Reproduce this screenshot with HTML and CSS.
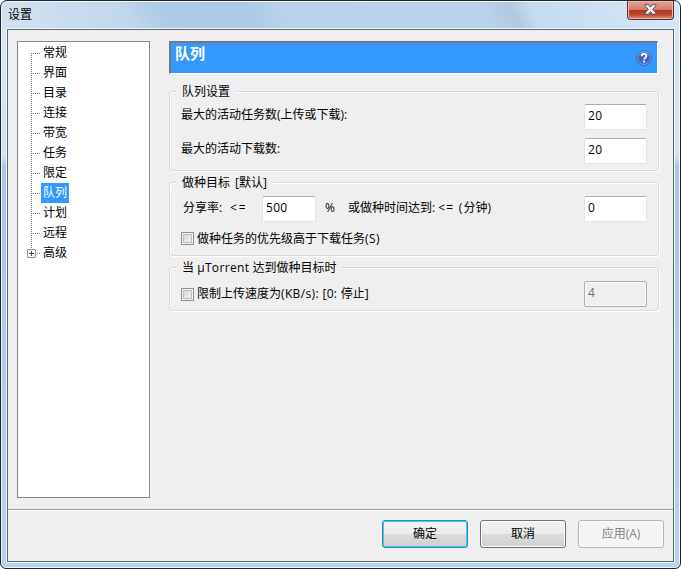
FILE: index.html
```html
<!DOCTYPE html>
<html lang="zh-CN">
<head>
<meta charset="utf-8">
<title>设置</title>
<link rel="stylesheet" href="styles.css">
</head>
<body>
<div class="window">
  <header class="titlebar">
    <span class="title">设置</span>
    <button class="close" aria-label="关闭">
      <svg width="13" height="11" viewBox="0 0 13 11"><path d="M1 .7h3.4l2.1 2.4L8.600.7H12v1L8.700 5.300 12 9v1.200H8.600L6.500 7.800l-2.100 2.400H1V9l3.300-3.700L1 1.700z" fill="#f8f8f8" stroke="#5a4549" stroke-width="1"/></svg>
    </button>
  </header>
  <main class="client">
    <div class="body">
      <ul class="tree">
        <li><span>常规</span></li>
        <li><span>界面</span></li>
        <li><span>目录</span></li>
        <li><span>连接</span></li>
        <li><span>带宽</span></li>
        <li><span>任务</span></li>
        <li><span>限定</span></li>
        <li><span class="selected">队列</span></li>
        <li><span>计划</span></li>
        <li><span>远程</span></li>
        <li class="branch"><svg class="plus" width="9" height="9" viewBox="0 0 9 9"><rect x=".5" y=".5" width="8" height="8" rx=".5" fill="#f7f7f7" stroke="#929292"/><path d="M2 4.500h5M4.500 2v5" stroke="#34456e"/></svg><span>高级</span></li>
      </ul>
      <div class="page">
        <div class="banner">
          <span>队列</span>
          <svg class="help" width="16" height="16" viewBox="0 0 16 16"><defs><linearGradient id="h" x2="0" y2="1"><stop offset="0" stop-color="#7592d6"/><stop offset=".5" stop-color="#3e62b8"/><stop offset="1" stop-color="#4a78d0"/></linearGradient></defs><circle cx="8" cy="8" r="7.400" fill="url(#h)" stroke="#3558a5" stroke-width=".8"/><circle cx="8" cy="8" r="6.500" fill="none" stroke="#91aae4" stroke-width=".7"/><path d="M5.700 6.200C5.700 3.200 10.400 3.200 10.400 5.900 10.400 7.700 8.100 7.500 8.100 9.500" fill="none" stroke="#fff" stroke-width="1.600"/><rect x="7.200" y="10.700" width="1.800" height="1.800" fill="#fff"/></svg>
        </div>
        <section class="group limits">
          <h2>队列设置</h2>
          <div class="row"><label class="active-label">最大的活动任务数(上传或下载):</label><input class="value" value="20"></div>
          <div class="row"><label>最大的活动下载数:</label><input class="value" value="20"></div>
        </section>
        <section class="group goals">
          <h2 class="goal-title">做种目标 [默认]</h2>
          <div class="row"><label class="ratio">分享率:</label><span class="lte">&lt;=</span><input class="percent" value="500"><span class="unit">%</span><label class="time">或做种时间达到: <span class="wide">&lt;= (</span>分钟)</label><input class="value" value="0"></div>
          <div class="row check-row"><i class="check"></i><label class="priority">做种任务的优先级高于下载任务<span class="key">(S)</span></label></div>
        </section>
        <section class="group reached">
          <h2 class="reach-title">当 <span class="brand">µTorrent</span> 达到做种目标时</h2>
          <div class="row"><i class="check"></i><label class="speed">限制上传速度为<span class="rate">(KB/s): [0: </span>停止]</label><input class="value" value="4" disabled></div>
        </section>
      </div>
    </div>
    <footer class="actions">
      <button class="btn primary">确定</button>
      <button class="btn">取消</button>
      <button class="btn" disabled>应用(A)</button>
    </footer>
  </main>
</div>
</body>
</html>
```
FILE: styles.css
```css
* { box-sizing: border-box; }
body {
  margin: 0;
  background: #fff;
  color: #000;
  font: 12px/20px "Open Sans", "Noto Sans CJK SC", sans-serif;
}
button, input { font: inherit; color: inherit; }
.window {
  width: 681px;
  height: 569px;
  padding: 0 5px 5px;
  border: 1px solid #20242b;
  border-radius: 7px 7px 6px 6px;
  box-shadow: inset 0 0 0 1px #eef8ff;
  background:
    linear-gradient(180deg, transparent 0 155px, #a9c7e5 165px, #b5d3ee 100%),
    linear-gradient(65deg, #d3e2f2 0, #c1d7ec 19%, #b0cbe5 24%, #adc9e3 37%, #b8d2ec 41%, #bbd4ed 70%, #b2c8de 75%, #c4dbf0 78%, #d6e8f7 100%) 0 0 / 100% 28px no-repeat,
    linear-gradient(#d6e6f5, #c5daef);
}
.titlebar { display: flex; height: 27px; justify-content: space-between; }
.title { margin: 4px 0 0 2px; }
.close {
  width: 47px;
  height: 19px;
  margin: 0 1px 0 auto;
  padding: 0;
  border: 1px solid #632d2d;
  border-top: 0;
  border-radius: 0 0 4px 4px;
  box-shadow: inset 0 0 0 1px #efb5aa;
  background: linear-gradient(#e7a596 0, #d47b6d 48%, #b73224 50%, #bc4635 75%, #dd8f70 100%);
  display: flex;
  align-items: center;
  justify-content: center;
}
.close svg { margin-top: -1px; }
.client {
  display: flex;
  flex-direction: column;
  width: 669px;
  height: 535px;
  border: 1px solid #edf8ff;
  outline: 1px solid #596672;
  outline-offset: -2px;
  background: #efefef;
}
.body { display: flex; gap: 19px; height: 480px; padding: 12px 15px 0 10px; }
.tree {
  width: 133px;
  height: 457px;
  margin: 0;
  padding: 1px 0 0 13px;
  list-style: none;
  border: 1px solid #828790;
  background: #fff;
}
.tree li {
  display: flex;
  align-items: center;
  height: 20px;
  padding-left: 10px;
  background:
    repeating-linear-gradient(90deg, #777 0 1px, transparent 1px 2px) 0 10px / 9px 1px no-repeat,
    repeating-linear-gradient(180deg, #777 0 1px, transparent 1px 2px) 0 0 / 1px 20px no-repeat;
}
.tree li:first-child { background-position: 0 10px, 0 10px; background-size: 9px 1px, 1px 10px; }
.tree .branch { background-size: 9px 1px, 1px 10px; }
.tree span { height: 20px; padding: 0 2px; line-height: 19px; }
.tree .selected { background: #3399ff; color: #fff; }
.plus { flex: none; margin: 1px 5px 0 -14px; }
.page { width: 490px; }
.banner {
  display: flex;
  justify-content: space-between;
  width: 489px;
  height: 33px;
  padding: 0 5px 0 4px;
  border-style: solid;
  border-width: 2px 1px 1px 2px;
  border-color: #777 #fff #fff #777;
  background: #3399ff;
  color: #fff;
  font-size: 15px;
  font-weight: bold;
}
.help { margin-top: 7px; }
.group {
  width: 490px;
  padding: 0 11px;
  border: 1px solid #d1dde3;
  border-radius: 3px;
  box-shadow: inset 1px 1px #fff, 1px 1px #fff;
}
.limits { height: 80px; margin-top: 17px; }
.goals { height: 74px; margin-top: 11px; }
.reached { height: 44px; margin-top: 11px; }
h2 {
  width: max-content;
  height: 20px;
  margin: -10px 0 -1px -5px;
  padding: 0 6px;
  background: #efefef;
  font: inherit;
}
.goal-title { word-spacing: 2px; }
.brand { letter-spacing: .35px; }
.row { display: flex; height: 26px; align-items: center; white-space: nowrap; }
.row label { line-height: 20px; margin-top: -3px; }
.limits .row { margin-top: 3px; }
.limits .row + .row { margin-top: 8px; }
.limits label { margin-top: -5px; }
.goals > .row { margin-top: 4px; }
.goals > .check-row { margin-top: 3px; }
.row .priority, .row .speed { margin-top: 0; }
.check-row .priority { margin-top: 1px; }
.key { letter-spacing: .4px; }
.rate { letter-spacing: .35px; }
.wide { letter-spacing: 1.2px; }
.reached .row { margin-top: 4px; }
.row .value { width: 63px; margin-left: auto; }
input {
  height: 26px;
  padding: 0 3px 3px;
  border: 1px solid #dfe4eb;
  border-top-color: #abadb3;
  border-radius: 2px;
  background: #fff;
  letter-spacing: .3px;
}
input:disabled { border-color: #adadad; box-shadow: inset 0 0 0 1px #f9f9f9; background: #efefef; color: #6d6d6d; }
.percent { width: 54px; }
.row .ratio { width: 48px; padding-left: 2px; }
.lte { width: 33px; padding-left: 1px; letter-spacing: 2px; margin-top: -3px; }
.unit { width: 32px; padding-left: 9px; margin-top: -3px; }
.check {
  width: 13px;
  height: 13px;
  margin-right: 3px;
  border: 1px solid #8e8f8f;
  box-shadow: inset 0 0 0 1px #f4f4f4, inset 0 0 0 2px #b9bdc2;
  background: linear-gradient(135deg, #ced1d5, #f6f6f6);
}
.actions {
  display: flex;
  gap: 12px;
  justify-content: flex-end;
  height: 53px;
  padding: 10px 9px 0 0;
  margin: 0 1px;
  border-top: 1px solid #999;
  box-shadow: inset 0 1px #fff;
}
.btn {
  width: 86px;
  height: 28px;
  padding: 0 0 1px;
  border: 1px solid #707070;
  border-radius: 3px;
  box-shadow: inset 0 0 0 1px #fcfcfc;
  background: linear-gradient(#f3f3f3 0, #ebebeb 49%, #dddddd 50%, #cfcfcf 100%);
}
.primary { border-color: #3c7fb1; box-shadow: inset 0 0 0 1px #37cdf4; }
.btn:disabled { border-color: #b0b5b8; background: #f4f4f4; color: #838383; }
```
